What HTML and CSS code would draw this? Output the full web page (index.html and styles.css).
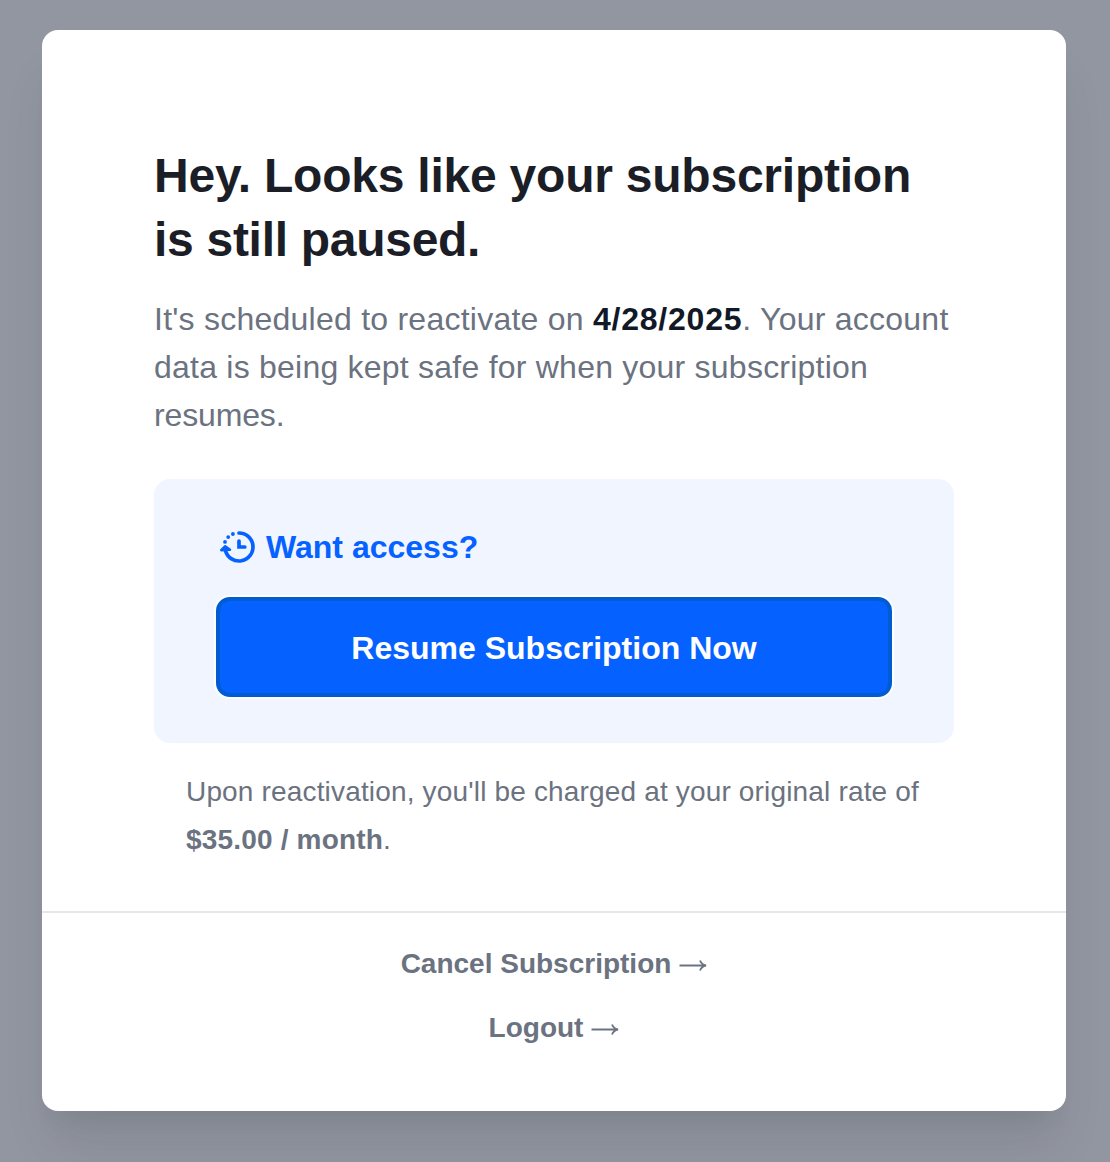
FILE: index.html
```html
<!DOCTYPE html>
<html lang="en">
<head>
<meta charset="utf-8">
<title>Subscription paused</title>
<link rel="stylesheet" href="styles.css">
</head>
<body>
<main class="card">
  <section class="content">
    <h1 class="title"><span class="title-first">Hey. Looks like your subscription</span><br><span class="title-second">is still paused.</span></h1>
    <p class="lead"><span class="lead-first">It's scheduled to reactivate on <strong class="date">4/28/2025</strong>. Your account</span><br><span class="lead-second">data is being kept safe for when your subscription</span><br><span class="lead-third">resumes.</span></p>
    <div class="panel">
      <h2 class="panel-title">
        <svg class="clock" width="40" height="40" viewBox="0 0 40 40" fill="none" stroke="currentColor" stroke-width="3.7" stroke-linecap="round" stroke-linejoin="miter">
          <path d="M21 6a14 14 0 1 1-13.500 17.700"/>
          <path d="M21 14v6h5.800"/>
          <path d="M7.200 19.200 3.200 23.200 12 22.800z" fill="currentColor" stroke-width="2.400" stroke-linejoin="round"/>
          <g fill="currentColor" stroke="none"><circle cx="14.900" cy="7" r="1.900"/><circle cx="10.200" cy="10.100" r="1.900"/><circle cx="7" cy="14.900" r="1.900"/></g>
        </svg>
        <span class="panel-text">Want access?</span>
      </h2>
      <button class="resume"><span class="resume-text">Resume Subscription Now</span></button>
    </div>
    <p class="note"><span class="note-first">Upon reactivation, you'll be charged at your original rate of</span><br><strong class="price">$35.00 / month</strong>.</p>
  </section>
  <footer class="links">
    <a class="link"><span class="cancel-text">Cancel Subscription</span><svg class="arrow" width="28" height="14" viewBox="0 0 28 14" fill="none" stroke="currentColor" stroke-width="1.8"><path d="M0.500 7.500h26M21 2.500q1.500 4 6 5-4.500 1-6 5"/></svg></a>
    <a class="link"><span class="logout-text">Logout</span><svg class="arrow" width="28" height="14" viewBox="0 0 28 14" fill="none" stroke="currentColor" stroke-width="1.8"><path d="M0.500 7.500h26M21 2.500q1.500 4 6 5-4.500 1-6 5"/></svg></a>
  </footer>
</main>
</body>
</html>
```
FILE: styles.css
```css
* { box-sizing: border-box; }
body {
  margin: 0;
  height: 1162px;
  padding: 30px 44px 0 42px;
  overflow: hidden;
  background: #9296a0;
  font-family: "Liberation Sans", Arial, sans-serif;
  color: #6b7280;
}
.card {
  height: 1081px;
  border-radius: 16px;
  background: #fff;
  box-shadow: 0 40px 50px -10px rgba(0, 20, 30, .1), 0 20px 20px -10px rgba(0, 20, 30, .04);
}
.content { height: 881px; padding: 114px 112px 0; }
.title, .lead, .panel-title, .note { margin: 0; white-space: nowrap; }
.title { font-size: 48px; line-height: 64px; color: #1b1e26; letter-spacing: -.23px; }
.title-second { letter-spacing: -.29px; }
.lead { margin-top: 23px; font-size: 32px; line-height: 48px; }
.lead-first { letter-spacing: .24px; }
.lead-second { letter-spacing: .23px; }
.lead-third { letter-spacing: -.15px; }
.date { color: #111827; letter-spacing: .78px; }
.panel {
  height: 264px;
  margin-top: 40px;
  padding: 44px 62px 0;
  border-radius: 16px;
  background: #f0f5ff;
}
.panel-title {
  display: flex;
  align-items: center;
  height: 48px;
  font-size: 32px;
  color: #0561ff;
}
.clock { margin-left: 2px; margin-right: 8px; }
.resume {
  display: block;
  width: 676px;
  height: 100px;
  margin-top: 26px;
  padding: 2px 0 0;
  border: 4px solid #005dd1;
  border-radius: 14px;
  background: #0561ff;
  box-shadow: 0 0 0 2px #fff;
  color: #fff;
  font: bold 32px "Liberation Sans", Arial, sans-serif;
}
.note { margin-top: 25px; padding-left: 32px; font-size: 28px; line-height: 48px; }
.note-first { letter-spacing: .165px; }
.price { letter-spacing: .18px; }
.links {
  display: flex;
  flex-direction: column;
  align-items: center;
  gap: 16px;
  padding-top: 27px;
  border-top: 2px solid #e5e7eb;
  font-size: 28px;
  font-weight: bold;
}
.link { display: flex; align-items: center; height: 48px; gap: 8px; }
.arrow { margin-top: 2px; }
```
